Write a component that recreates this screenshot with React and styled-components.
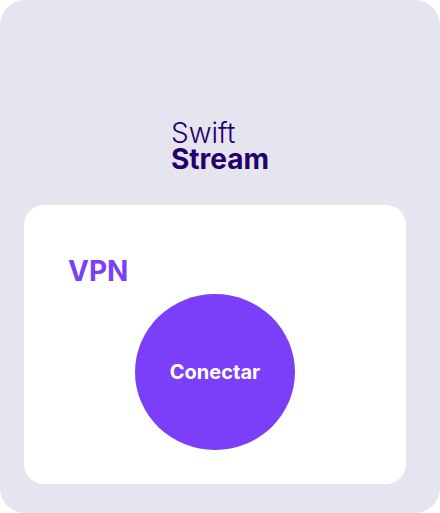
import React from "react";
import styled, { createGlobalStyle } from "styled-components";

const GlobalStyle = createGlobalStyle`
  * { box-sizing: border-box; }
  body { margin: 0; background: #ffffff; }
`;

const Screen = styled.main`
  display: flex;
  flex-direction: column;
  min-height: 100vh;
  padding: 120px 0 29px;
  border-radius: 25px;
  background: #e5e5ef;
  font-family: Inter, sans-serif;
`;

const Brand = styled.h1`
  align-self: center;
  margin: 0 0 33px;
  color: #23006a;
  font-size: 28px;
  line-height: 26px;
  white-space: nowrap;
`;

const BrandLine = styled.span`
  display: block;
  font-weight: ${(p) => (p.$strong ? 700 : 300)};
`;

const Card = styled.section`
  display: flex;
  flex: 1;
  flex-direction: column;
  margin: 0 34px 0 24px;
  padding: 50px 44px 34px;
  border-radius: 20px;
  background: #ffffff;
`;

const Title = styled.h2`
  margin: 0 0 7px;
  color: #7b3ff6;
  font-size: 28px;
  font-weight: 700;
  line-height: 32px;
`;

const ConnectButton = styled.button`
  align-self: center;
  width: 160px;
  height: 156px;
  padding: 0;
  border: 0;
  border-radius: 50%;
  background: #7b3ff9;
  color: #ffffff;
  font-family: inherit;
  font-size: 20px;
  font-weight: 700;
  line-height: 24px;
  cursor: pointer;
`;

export default function App() {
  return (
    <>
      <GlobalStyle />
      <Screen>
        <Brand>
          <BrandLine>Swift</BrandLine>
          <BrandLine $strong>Stream</BrandLine>
        </Brand>
        <Card>
          <Title>VPN</Title>
          <ConnectButton type="button">Conectar</ConnectButton>
        </Card>
      </Screen>
    </>
  );
}
